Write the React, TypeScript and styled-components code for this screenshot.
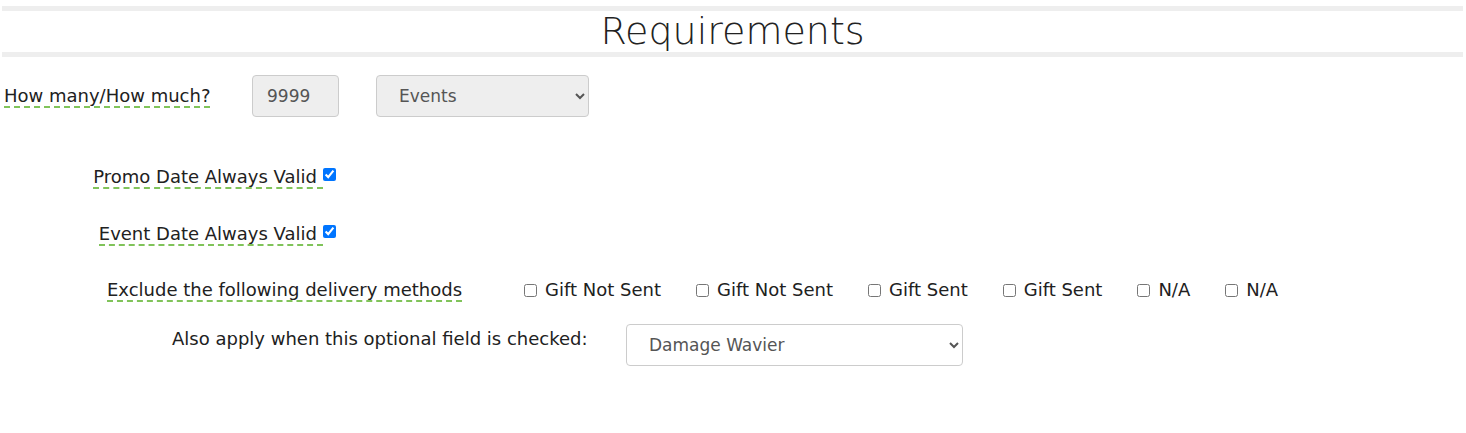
import React from "react";
import styled, { createGlobalStyle } from "styled-components";

const GlobalStyle = createGlobalStyle`
  body {
    margin: 0;
    background: #fff;
    font-family: "DejaVu Sans", "Noto Sans", sans-serif;
    color: #212121;
  }
`;

const Page = styled.div`
  padding-top: 6px;
`;

const Header = styled.div`
  margin: 0 3px 0 2px;
  border-top: 5px solid #eee;
  border-bottom: 5px solid #eee;
  height: 41px;
  display: flex;
  justify-content: center;
`;

const Title = styled.h1`
  margin: 0;
  font-size: 38px;
  font-weight: 300;
  line-height: 41px;
  color: #222;
  white-space: nowrap;
`;

const Row = styled.div<{ $top: number; $indent?: number; $align?: string }>`
  display: flex;
  align-items: ${(p) => p.$align || "center"};
  margin-top: ${(p) => p.$top}px;
  padding-left: ${(p) => p.$indent || 0}px;
  font-size: 18px;
  line-height: 24px;
`;

const LabelCol = styled.div<{ $width: number; $right?: boolean }>`
  flex: none;
  width: ${(p) => p.$width}px;
  text-align: ${(p) => (p.$right ? "right" : "left")};
  white-space: nowrap;
`;

const Hint = styled.span<{ $trail?: boolean }>`
  border-bottom: 2px dashed #80c35a;
  padding-right: ${(p) => (p.$trail ? 6 : 0)}px;
`;

const Plain = styled.span`
  display: inline-block;
  margin-top: 3px;
`;

const NumberInput = styled.input`
  box-sizing: border-box;
  width: 87px;
  height: 42px;
  padding: 0 14px;
  border: 1px solid #ccc;
  border-radius: 4px;
  background: #eee;
  color: #555;
  font-family: inherit;
  font-size: 17px;
  margin-right: 37px;

  &:read-only {
    color: #555;
  }
`;

const Select = styled.select<{ $width: number; $muted?: boolean }>`
  box-sizing: border-box;
  width: ${(p) => p.$width}px;
  height: 42px;
  padding: 0 12px 0 18px;
  border: 1px solid #ccc;
  border-radius: 4px;
  background-color: ${(p) => (p.$muted ? "#eee" : "#fff")};
  color: #555;
  font-family: inherit;
  font-size: 17px;
`;

const Check = styled.input`
  flex: none;
  width: 13px;
  height: 13px;
  margin: 0;
`;

const TopCheck = styled(Check)`
  align-self: flex-start;
  margin-top: 3px;
`;

const Options = styled.div`
  display: flex;
  align-items: center;
  gap: 35px;
`;

const Option = styled.label`
  display: flex;
  align-items: center;
  gap: 8px;
  white-space: nowrap;
`;

const methods = ["Gift Not Sent", "Gift Not Sent", "Gift Sent", "Gift Sent", "N/A", "N/A"];

export default function App() {
  return (
    <Page>
      <GlobalStyle />
      <Header>
        <Title>Requirements</Title>
      </Header>

      <Row $top={18} $indent={4}>
        <LabelCol $width={248}>
          <Hint>How many/How much?</Hint>
        </LabelCol>
        <NumberInput type="text" value="9999" readOnly />
        <Select $width={213} $muted defaultValue="events">
          <option value="events">Events</option>
        </Select>
      </Row>

      <Row $top={48}>
        <LabelCol $width={323} $right>
          <Hint $trail>Promo Date Always Valid</Hint>
        </LabelCol>
        <TopCheck type="checkbox" defaultChecked />
      </Row>

      <Row $top={33}>
        <LabelCol $width={323} $right>
          <Hint $trail>Event Date Always Valid</Hint>
        </LabelCol>
        <TopCheck type="checkbox" defaultChecked />
      </Row>

      <Row $top={32} $indent={107}>
        <LabelCol $width={417}>
          <Hint>Exclude the following delivery methods</Hint>
        </LabelCol>
        <Options>
          {methods.map((m, i) => (
            <Option key={i}>
              <Check type="checkbox" />
              {m}
            </Option>
          ))}
        </Options>
      </Row>

      <Row $top={22} $indent={172} $align="flex-start">
        <LabelCol $width={454}>
          <Plain>Also apply when this optional field is checked:</Plain>
        </LabelCol>
        <Select $width={337} defaultValue="damage">
          <option value="damage">Damage Wavier</option>
        </Select>
      </Row>
    </Page>
  );
}
